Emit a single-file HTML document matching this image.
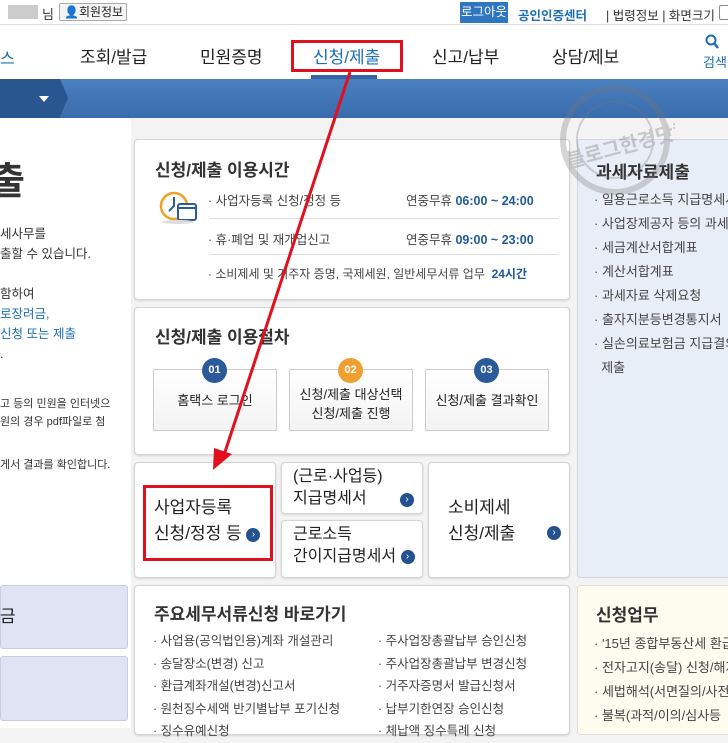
<!DOCTYPE html>
<html><head><meta charset="utf-8">
<style>
*{box-sizing:border-box;margin:0;padding:0}
body{width:728px;height:728px;overflow:hidden;position:relative;background:#f3f3f3;font-family:"Liberation Sans","Noto Sans CJK KR",sans-serif;color:#222}
.a{position:absolute}
.card{position:absolute;background:#fff;border:1px solid #d4d4d4;border-radius:4px;box-shadow:0 1px 2px rgba(0,0,0,.12)}
.circ{display:inline-block;width:14px;height:14px;border-radius:50%;background:#24518f;color:#fff;font-size:10px;line-height:14px;text-align:center;vertical-align:middle}
.li{font-size:12.5px;color:#444;white-space:nowrap}
</style></head><body>
<!-- top bar -->
<div class="a" style="left:0;top:0;width:728px;height:25px;background:#fff;border-bottom:1px solid #ddd"></div>
<div class="a" style="left:8px;top:5px;width:30px;height:14px;background:#ccc"></div>
<div class="a" style="left:42px;top:4px;font-size:13px;color:#333">님</div>
<div class="a" style="left:59px;top:3px;width:68px;height:18px;border:1px solid #aaa;border-radius:2px;background:#f4f4f4;font-size:12px;line-height:16px;padding-left:4px">👤회원정보</div>
<div class="a" style="left:460px;top:2px;width:48px;height:21px;background:#2f76c0;color:#fff;font-size:12.5px;line-height:21px;text-align:center">로그아웃</div>
<div class="a" style="left:518px;top:5px;font-size:12.5px;color:#1a6fb5;font-weight:bold">공인인증센터</div>
<div class="a" style="left:606px;top:5px;font-size:12.5px;color:#333">| 법령정보 | 화면크기</div>
<div class="a" style="left:719px;top:5px;width:12px;height:15px;border:1px solid #888;border-radius:2px"></div>
<!-- nav -->
<div class="a" style="left:0;top:25px;width:728px;height:54px;background:#fff"></div>
<div class="a" style="left:0;top:45px;font-size:16px;color:#1a6fb5">스</div>
<div class="a" style="left:80px;top:43px;font-size:17px">조회/발급</div>
<div class="a" style="left:200px;top:43px;font-size:17px">민원증명</div>
<div class="a" style="left:313px;top:43px;font-size:17px;color:#1a6fb5">신청/제출</div>
<div class="a" style="left:432px;top:43px;font-size:17px">신고/납부</div>
<div class="a" style="left:552px;top:43px;font-size:17px">상담/제보</div>
<svg class="a" style="left:705px;top:34px" width="14" height="16"><circle cx="6" cy="6" r="4.5" fill="none" stroke="#1a6fb5" stroke-width="2"/><path d="M9 9l4 5" stroke="#1a6fb5" stroke-width="2.5"/></svg>
<div class="a" style="left:703px;top:52px;font-size:13px;color:#1a6fb5">검색</div>
<div class="a" style="left:291px;top:40px;width:112px;height:32px;border:3px solid #e0101e"></div>
<div class="a" style="left:311px;top:75px;width:66px;height:4px;background:#3566a8"></div>
<!-- blue band -->
<div class="a" style="left:0;top:79px;width:728px;height:39px;background:linear-gradient(#4a7fc0,#3a6cad)"></div>
<div class="a" style="left:0;top:79px;width:60px;height:39px;background:#2a5690"></div>
<div class="a" style="left:60px;top:79px;width:0;height:0;border-top:19.5px solid transparent;border-bottom:19.5px solid transparent;border-left:8px solid #2a5690"></div>
<div class="a" style="left:39px;top:96px;border-left:5px solid transparent;border-right:5px solid transparent;border-top:6px solid #fff"></div>
<!-- left column -->
<div class="a" style="left:0;top:118px;width:131px;height:610px;background:#fff"></div>
<div class="a" style="left:-10px;top:150px;font-size:38px;font-weight:bold;color:#333">출</div>
<div class="a" style="left:0;top:224px;font-size:12.5px;line-height:20px;color:#333">세사무를<br>출할 수 있습니다.<br><br>함하여<br><span style="color:#1a6fb5">로장려금,<br>신청 또는 제출</span><br>.</div>
<div class="a" style="left:0;top:395px;font-size:11px;line-height:18px;color:#333">고 등의 민원을 인터넷으<br>원의 경우 pdf파일로 첨</div>
<div class="a" style="left:0;top:456px;font-size:11px;color:#333">게서 결과를 확인합니다.</div>
<div class="a" style="left:0;top:585px;width:128px;height:64px;background:#dfe3f3;border:1px solid #c8cde0;border-radius:3px"></div>
<div class="a" style="left:0;top:602px;font-size:17px">금</div>
<div class="a" style="left:0;top:656px;width:128px;height:65px;background:#dfe3f3;border:1px solid #c8cde0;border-radius:3px"></div>
<!-- card 1 -->
<div class="card" style="left:134px;top:139px;width:436px;height:161px"></div>
<div class="a" style="left:155px;top:156px;font-size:17px;font-weight:bold;color:#333">신청/제출 이용시간</div>
<svg class="a" style="left:158px;top:190px" width="42" height="34"><circle cx="16" cy="16" r="13" fill="#fff" stroke="#f0a22a" stroke-width="2.5"/><path d="M16 7v9l-5 5" stroke="#2d5b9a" stroke-width="2" fill="none"/><rect x="20" y="14" width="18" height="16" rx="2" fill="#fff" stroke="#2d5b9a" stroke-width="2"/><path d="M20 18h18" stroke="#2d5b9a" stroke-width="2"/><ellipse cx="20" cy="32" rx="16" ry="2" fill="#ddd"/></svg>
<div class="a li" style="left:208px;top:190px">· 사업자등록 신청/정정 등</div>
<div class="a li" style="left:406px;top:190px">연중무휴 <b style="color:#1f5a9c">06:00 ~ 24:00</b></div>
<div class="a" style="left:209px;top:218px;width:350px;height:1px;background:#ddd"></div>
<div class="a li" style="left:208px;top:229px">· 휴·폐업 및 재개업신고</div>
<div class="a li" style="left:406px;top:229px">연중무휴 <b style="color:#1f5a9c">09:00 ~ 23:00</b></div>
<div class="a" style="left:209px;top:254px;width:350px;height:1px;background:#ddd"></div>
<div class="a li" style="left:208px;top:265px;font-size:12px">· 소비제세 및 거주자 증명, 국제세원, 일반세무서류 업무 &nbsp;<b style="color:#1f5a9c">24시간</b></div>
<!-- card 2 -->
<div class="card" style="left:134px;top:307px;width:436px;height:148px"></div>
<div class="a" style="left:155px;top:323px;font-size:17px;font-weight:bold;color:#333">신청/제출 이용절차</div>
<div class="a" style="left:153px;top:369px;width:124px;height:62px;border:1px solid #ccc;background:linear-gradient(#fff,#f3f3f3);font-size:13px;text-align:center;line-height:62px">홈택스 로그인</div>
<div class="a" style="left:289px;top:369px;width:124px;height:62px;border:1px solid #ccc;background:linear-gradient(#fff,#f3f3f3);font-size:13px;text-align:center;padding-top:15px;line-height:19px">신청/제출 대상선택<br>신청/제출 진행</div>
<div class="a" style="left:425px;top:369px;width:124px;height:62px;border:1px solid #ccc;background:linear-gradient(#fff,#f3f3f3);font-size:13px;text-align:center;line-height:62px">신청/제출 결과확인</div>
<div class="a" style="left:202px;top:358px;width:25px;height:25px;border-radius:50%;background:#2a5a9a;color:#fff;font-size:11px;font-weight:bold;text-align:center;line-height:25px">01</div>
<div class="a" style="left:338px;top:358px;width:25px;height:25px;border-radius:50%;background:#f0a030;color:#fff;font-size:11px;font-weight:bold;text-align:center;line-height:25px">02</div>
<div class="a" style="left:474px;top:358px;width:25px;height:25px;border-radius:50%;background:#2a5a9a;color:#fff;font-size:11px;font-weight:bold;text-align:center;line-height:25px">03</div>
<!-- row buttons -->
<div class="card" style="left:134px;top:462px;width:142px;height:116px"></div>
<div class="a" style="left:154px;top:495px;font-size:17px;line-height:26px">사업자등록<br>신청/정정 등 <span class="circ">›</span></div>
<div class="a" style="left:143px;top:485px;width:130px;height:76px;border:3px solid #e0101e"></div>
<div class="card" style="left:281px;top:462px;width:142px;height:52px"></div>
<div class="a" style="left:293px;top:466px;font-size:16px;line-height:22px">(근로·사업등)<br>지급명세서</div>
<div class="a" style="left:400px;top:491px"><span class="circ">›</span></div>
<div class="card" style="left:281px;top:520px;width:142px;height:58px"></div>
<div class="a" style="left:293px;top:524px;font-size:16px;line-height:22px;white-space:nowrap">근로소득<br>간이지급명세서 <span class="circ">›</span></div>
<div class="card" style="left:428px;top:462px;width:142px;height:116px"></div>
<div class="a" style="left:448px;top:495px;font-size:17px;line-height:26px">소비제세<br>신청/제출</div>
<div class="a" style="left:547px;top:524px"><span class="circ">›</span></div>
<!-- bottom card -->
<div class="card" style="left:134px;top:585px;width:436px;height:150px"></div>
<div class="a" style="left:154px;top:600px;font-size:17px;font-weight:bold;color:#333">주요세무서류신청 바로가기</div>
<div class="a li" style="left:153px;top:630px;line-height:22.5px">· 사업용(공익법인용)계좌 개설관리<br>· 송달장소(변경) 신고<br>· 환급계좌개설(변경)신고서<br>· 원천징수세액 반기별납부 포기신청<br>· 징수유예신청</div>
<div class="a li" style="left:378px;top:630px;line-height:22.5px">· 주사업장총괄납부 승인신청<br>· 주사업장총괄납부 변경신청<br>· 거주자증명서 발급신청서<br>· 납부기한연장 승인신청<br>· 체납액 징수특례 신청</div>
<!-- right -->
<div class="a" style="left:577px;top:139px;width:160px;height:439px;background:#e8eef7;border:1px solid #cfd7e3;border-radius:3px"></div>
<div class="a" style="left:596px;top:158px;font-size:17px;font-weight:bold;color:#333">과세자료제출</div>
<div class="a li" style="left:594px;top:188px;line-height:24px;font-size:13px">· 일용근로소득 지급명세서<br>· 사업장제공자 등의 과세자료<br>· 세금계산서합계표<br>· 계산서합계표<br>· 과세자료 삭제요청<br>· 출자지분등변경통지서<br>· 실손의료보험금 지급결의<br>&nbsp;&nbsp;제출</div>
<div class="a" style="left:577px;top:585px;width:160px;height:150px;background:#fcfcef;border:1px solid #ddd;border-radius:3px"></div>
<div class="a" style="left:596px;top:601px;font-size:17px;font-weight:bold;color:#333">신청업무</div>
<div class="a li" style="left:594px;top:632px;line-height:24px;font-size:13px">· '15년 종합부동산세 환급<br>· 전자고지(송달) 신청/해지<br>· 세법해석(서면질의/사전<br>· 불복(과적/이의/심사등</div>
<!-- watermark -->
<svg class="a" style="left:555px;top:80px;opacity:.3" width="120" height="120"><circle cx="60" cy="60" r="52" fill="none" stroke="#777" stroke-width="6"/><circle cx="60" cy="60" r="38" fill="none" stroke="#777" stroke-width="2"/><text x="8" y="75" font-size="20" font-weight="bold" fill="#666" font-family="Noto Sans CJK KR" transform="rotate(-15 60 60)">블로그한경닷컴</text></svg>
<!-- red arrow -->
<svg class="a" style="left:0;top:0" width="728" height="728"><line x1="350" y1="72" x2="224" y2="455" stroke="#e0101e" stroke-width="3"/><polygon points="213,470 214,448 232,454" fill="#e0101e"/></svg>
</body></html>
